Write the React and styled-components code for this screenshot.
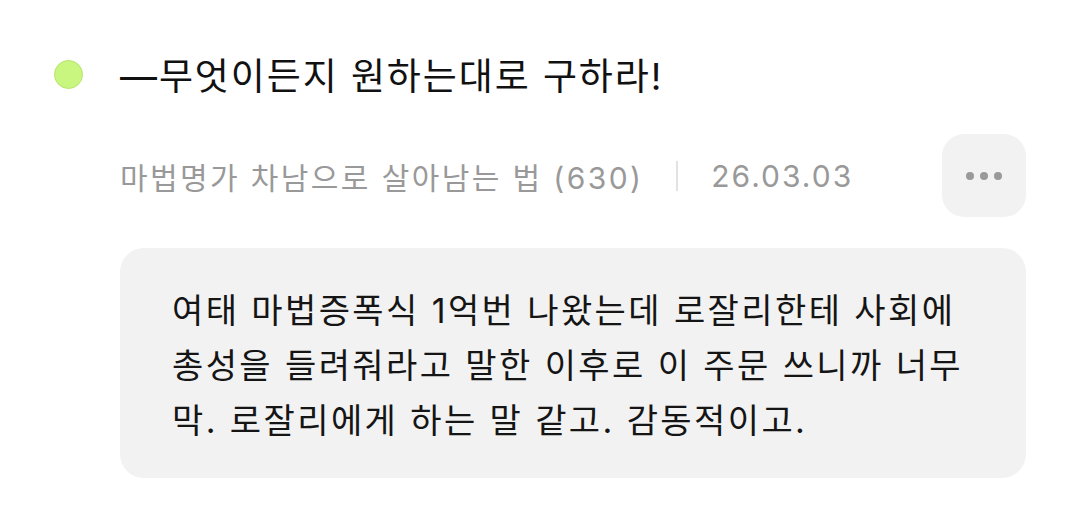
import React from "react";
import styled, { createGlobalStyle } from "styled-components";

const GlobalStyle = createGlobalStyle`
  html, body {
    margin: 0;
    padding: 0;
    background: #ffffff;
  }
  body {
    font-family: "Inter", "Noto Sans CJK KR", sans-serif;
    -webkit-font-smoothing: antialiased;
  }
`;

const Page = styled.div`
  width: 1080px;
  height: 512px;
  box-sizing: border-box;
  padding: 54px 54px 0 54px;
  display: flex;
  gap: 37px;
`;

const Dot = styled.div`
  flex: none;
  width: 27px;
  height: 27px;
  margin-top: 6px;
  border-radius: 50%;
  background: #c8f67e;
  border: 1px solid #b7e46e;
`;

const Content = styled.div`
  flex: 1;
  display: flex;
  flex-direction: column;
`;

const Title = styled.div`
  font-size: 37px;
  line-height: 46px;
  color: #111111;
  letter-spacing: 1.9px;
`;

const MetaRow = styled.div`
  margin-top: 34px;
  display: flex;
  align-items: center;
  justify-content: space-between;
`;

const Meta = styled.div`
  display: flex;
  align-items: center;
  font-size: 30px;
  color: #999999;
`;

const Source = styled.span`
  letter-spacing: 2.4px;
`;

const Divider = styled.span`
  width: 2px;
  height: 30px;
  margin: 0 33px 0 33px;
  background: #e2e2e2;
`;

const Date = styled.span`
  letter-spacing: 2px;
`;

const MoreButton = styled.button`
  width: 84px;
  height: 83px;
  border: none;
  border-radius: 22px;
  background: #f2f2f2;
  display: flex;
  align-items: center;
  justify-content: center;
  gap: 6px;
  padding: 0;
  cursor: pointer;
`;

const MoreDot = styled.span`
  width: 8px;
  height: 8px;
  border-radius: 50%;
  background: #999999;
`;

const Body = styled.div`
  margin-top: 31px;
  background: #f2f2f2;
  border-radius: 24px;
  padding: 35px 48px 30px 52px;
  font-size: 34px;
  line-height: 55px;
  letter-spacing: 2.4px;
  color: #151515;
  word-break: keep-all;
`;

const App = () => {
  return (
    <>
      <GlobalStyle />
      <Page>
        <Dot />
        <Content>
          <Title>—무엇이든지 원하는대로 구하라!</Title>
          <MetaRow>
            <Meta>
              <Source>마법명가 차남으로 살아남는 법 (630)</Source>
              <Divider />
              <Date>26.03.03</Date>
            </Meta>
            <MoreButton aria-label="더보기">
              <MoreDot />
              <MoreDot />
              <MoreDot />
            </MoreButton>
          </MetaRow>
          <Body>
            여태 마법증폭식 1억번 나왔는데 로잘리한테 사회에 총성을 들려줘라고 말한
            이후로 이 주문 쓰니까 너무 막. 로잘리에게 하는 말 같고. 감동적이고.
          </Body>
        </Content>
      </Page>
    </>
  );
};

export default App;
